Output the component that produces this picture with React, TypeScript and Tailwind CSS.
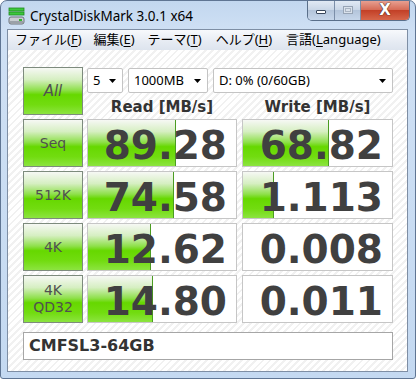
const GREEN =
  'bg-[linear-gradient(to_bottom,#f6f8f4_0%,#d6efc2_25%,#8fe04c_48%,#66d800_58%,#72dc10_80%,#8ce440_100%)]';

const rows = [
  { label: 'Seq', read: '89.28', write: '68.82', rw: 88, ww: 86 },
  { label: '512K', read: '74.58', write: '1.113', rw: 86, ww: 31 },
  { label: '4K', read: '12.62', write: '0.008', rw: 63, ww: 0 },
  { label: '4K QD32', read: '14.80', write: '0.011', rw: 65, ww: 0 },
];

function AppIcon() {
  return (
    <svg width="17" height="19" viewBox="0 0 17 19">
      <rect x="1" y="1" width="15" height="3" fill="#3cc83c" stroke="#1f8a1f" strokeWidth="0.8" />
      <rect x="1" y="5" width="15" height="3" fill="#3cc83c" stroke="#1f8a1f" strokeWidth="0.8" />
      <rect x="1" y="10" width="15" height="7" rx="2" fill="#c9cdd2" stroke="#6e757d" strokeWidth="1" />
      <rect x="2" y="14" width="13" height="2" fill="#9aa1a8" />
      <rect x="11" y="12" width="3" height="2" fill="#2fb52f" />
    </svg>
  );
}

function Dropdown({ w, text }: { w: string; text: string }) {
  return (
    <div
      className={`${w} flex h-[25px] items-center justify-between rounded-[2px] border border-[#c4c4c4] bg-white pl-[5px] pr-[6px] text-[13px] text-black`}
    >
      <span>{text}</span>
      <svg width="7" height="4" viewBox="0 0 7 4">
        <path d="M0 0h7L3.5 4z" fill="#000" />
      </svg>
    </div>
  );
}

function Label({ text, italic }: { text: string; italic?: boolean }) {
  return (
    <div
      className={`${GREEN} flex h-[48px] w-[60px] items-center justify-center border border-[#7d8b7d] text-center text-[14px] leading-[17px] text-[#505050] ${italic ? 'italic text-[15px]' : ''}`}
      style={{ fontFamily: '"DejaVu Sans", sans-serif' }}
    >
      {text === '4K QD32' ? (
        <span>
          4K
          <br />
          QD32
        </span>
      ) : (
        text
      )}
    </div>
  );
}

function Cell({ value, bar, w }: { value: string; bar: number; w: string }) {
  return (
    <div className={`relative flex h-[48px] ${w} items-center justify-end border border-[#c6c6c6] bg-white pr-[9px]`}>
      {bar > 0 && (
        <div
          className={`${GREEN} absolute top-0 bottom-0 left-0 border-r border-[#4b9c22]`}
          style={{ width: bar }}
        />
      )}
      <span
        className="relative pt-[4px] text-[39px] leading-none font-bold text-[#404040]"
        style={{ fontFamily: '"DejaVu Sans", sans-serif' }}
      >
        {value}
      </span>
    </div>
  );
}

export default function App() {
  return (
    <div
      className="flex h-[379px] w-[416px] flex-col overflow-hidden rounded-t-[7px] rounded-b-[3px] border border-[#5f7593] bg-[linear-gradient(to_bottom,#c2d7ef,#cfe0f4_30px,#c4d9f1)] pb-[6px] pl-[6px] pr-[7px]"
      style={{ fontFamily: '"Noto Sans", "Noto Sans CJK JP", sans-serif' }}
    >
      {/* title bar */}
      <div className="flex h-[28px] items-start justify-between">
        <div className="flex items-center pt-[5px] pl-[1px]">
          <AppIcon />
          <span className="ml-[5px] text-[13.5px] text-black">CrystalDiskMark 3.0.1 x64</span>
        </div>
        <div className="-mt-[1px] mr-[-2px] flex h-[21px] overflow-hidden rounded-b-[5px] border border-t-0 border-[#5a6f8a]">
          <div className="flex w-[27px] items-center justify-center border-r border-[#7b8ea8] bg-[linear-gradient(to_bottom,#e3ebf5,#c9d6e6_50%,#b3c4da_51%,#c6d6ea)]">
            <div className="mt-[4px] h-[4px] w-[10px] rounded-[1px] border border-[#38465a] bg-white" />
          </div>
          <div className="flex w-[26px] items-center justify-center border-r border-[#7b8ea8] bg-[linear-gradient(to_bottom,#e3ebf5,#c9d6e6_50%,#b3c4da_51%,#c6d6ea)]">
            <div className="h-[8px] w-[10px] border border-[#97a4b5] bg-[#d9e1eb] p-[1px]">
              <div className="h-full w-full border border-[#a9b4c2]" />
            </div>
          </div>
          <div className="flex w-[48px] items-center justify-center bg-[linear-gradient(to_bottom,#e9a597,#d56a55_50%,#c23f26_51%,#d6664a)]">
            <span
              className="text-[15px] leading-none font-bold text-white [text-shadow:0_0_1px_#2b1a16,0_0_1px_#2b1a16]"
              style={{ fontFamily: '"DejaVu Sans", sans-serif' }}
            >
              X
            </span>
          </div>
        </div>
      </div>

      {/* client */}
      <div className="flex flex-1 flex-col border border-[#7e8ea4] bg-[repeating-linear-gradient(135deg,#ffffff_0px,#ffffff_3px,#f1f1f1_3px,#f1f1f1_5px)]">
        {/* menu */}
        <div className="flex h-[20px] items-center bg-[linear-gradient(to_bottom,#f7f9fc,#e6ebf3_60%,#dde4ee)] text-[13px] text-black">
          <span className="ml-[7px]">
            ファイル(<span className="underline underline-offset-2">F</span>)
          </span>
          <span className="ml-[12px]">
            編集(<span className="underline underline-offset-2">E</span>)
          </span>
          <span className="ml-[13px]">
            テーマ(<span className="underline underline-offset-2">T</span>)
          </span>
          <span className="ml-[14px]">
            ヘルプ(<span className="underline underline-offset-2">H</span>)
          </span>
          <span className="ml-[14px]">
            言語(<span className="underline underline-offset-2">L</span>anguage)
          </span>
        </div>

        <div className="flex flex-col pt-[17px] pl-[15px]">
          <div className="flex h-[48px]">
            <Label text="All" italic />
            <div className="ml-[4px] flex w-[306px] flex-col">
              <div className="mt-[1px] flex gap-[5px]">
                <Dropdown w="w-[36px]" text="5" />
                <Dropdown w="w-[80px]" text="1000MB" />
                <Dropdown w="w-[180px]" text="D: 0% (0/60GB)" />
              </div>
              <div
                className="mt-[3px] flex text-[15px] font-bold text-[#333333]"
                style={{ fontFamily: '"DejaVu Sans", sans-serif' }}
              >
                <div className="w-[150px] text-center">Read [MB/s]</div>
                <div className="ml-[5px] w-[151px] text-center">Write [MB/s]</div>
              </div>
            </div>
          </div>

          {rows.map((r) => (
            <div key={r.label} className="mt-[4px] flex">
              <Label text={r.label} />
              <div className="ml-[4px]">
                <Cell value={r.read} bar={r.rw} w="w-[150px]" />
              </div>
              <div className="ml-[5px]">
                <Cell value={r.write} bar={r.ww} w="w-[151px]" />
              </div>
            </div>
          ))}

          <div
            className="mt-[9px] flex h-[28px] w-[370px] items-center border border-[#a6a6a6] bg-white pl-[5px] text-[16px] font-bold text-[#333333]"
            style={{ fontFamily: '"DejaVu Sans", sans-serif' }}
          >
            CMFSL3-64GB
          </div>
        </div>
      </div>
    </div>
  );
}
